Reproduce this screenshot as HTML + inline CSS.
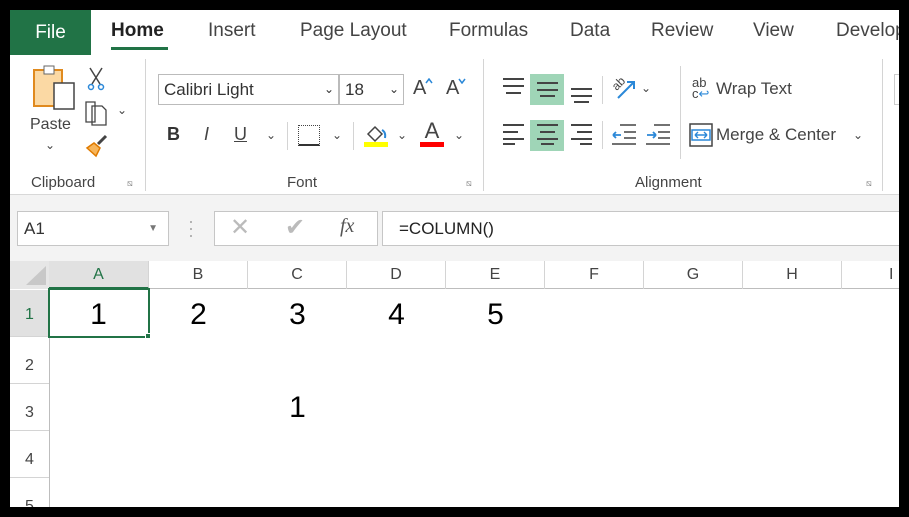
<!DOCTYPE html>
<html><head><meta charset="utf-8"><style>
*{margin:0;padding:0;box-sizing:border-box}
html,body{overflow:hidden}
body{width:909px;height:517px;background:#000;position:relative;overflow:hidden;font-family:"Segoe UI","Liberation Sans",sans-serif;color:#444}
.a{position:absolute}
.t{position:absolute;font-size:19px;color:#444;top:20px}
.ch{position:absolute;top:261px;height:28px;font-size:16px;color:#444;text-align:center;line-height:28px;border-right:1px solid #d4d4d4}
.rh{position:absolute;left:10px;width:39px;font-size:16px;color:#444;text-align:center;border-bottom:1px solid #d4d4d4}
.n{position:absolute;font-size:30px;color:#000;text-align:center;width:99px}
.sel{background:#9fd5b7}
.ln{position:absolute;height:2px;background:#444}
</style></head><body>
<div class="a" style="left:10px;top:10px;width:889px;height:497px;background:#fff;overflow:hidden">
</div>
<div class="a" style="left:10px;top:10px;width:81px;height:45px;background:#217346;color:#fff;font-size:19px;line-height:45px;text-align:center">File</div>
<div class="t" style="left:111px;color:#222;font-weight:600">Home</div>
<div class="a" style="left:111px;top:47px;width:57px;height:3px;background:#217346"></div>
<div class="t" style="left:208px">Insert</div>
<div class="t" style="left:300px">Page Layout</div>
<div class="t" style="left:449px">Formulas</div>
<div class="t" style="left:570px">Data</div>
<div class="t" style="left:651px">Review</div>
<div class="t" style="left:753px">View</div>
<div class="t" style="left:836px">Develop</div>
<div class="a" style="left:10px;top:194px;width:889px;height:1px;background:#d8d8d8"></div>
<div class="a" style="left:10px;top:195px;width:889px;height:66px;background:#f3f3f3"></div>
<svg class="a" style="left:32px;top:64px" width="46" height="48"><rect x="2" y="6" width="28" height="36" fill="#fbd9a4" stroke="#e08a1e" stroke-width="2"/><rect x="12" y="2" width="10" height="8" fill="#fff" stroke="#666"/><rect x="22" y="19" width="20" height="26" fill="#fff" stroke="#444" stroke-width="1.5"/></svg>
<div class="a" style="left:30px;top:116px;font-size:16px">Paste</div>
<div class="a" style="left:45px;top:138px;font-size:12px">⌄</div>
<svg class="a" style="left:86px;top:66px" width="20" height="25"><path d="M4 2 L14 18 M16 2 L6 18" stroke="#444" stroke-width="1.5"/><circle cx="5" cy="21" r="2.5" fill="none" stroke="#2b88d8" stroke-width="1.5"/><circle cx="15" cy="21" r="2.5" fill="none" stroke="#2b88d8" stroke-width="1.5"/></svg>
<svg class="a" style="left:84px;top:100px" width="26" height="26"><path d="M2 2h9v20H2z M8 6h10l4 4v15H8z" fill="#fff" stroke="#444" stroke-width="1.3"/></svg>
<div class="a" style="left:117px;top:103px;font-size:12px">⌄</div>
<svg class="a" style="left:84px;top:134px" width="26" height="24"><path d="M3 14 L12 22 L16 14 L10 9z" fill="#f7b55a" stroke="#e07b00" stroke-width="1.5"/><path d="M14 10 L22 2" stroke="#444" stroke-width="3"/></svg>
<div class="a" style="left:31px;top:174px;font-size:15px">Clipboard</div>
<div class="a" style="left:127px;top:178px;font-size:9px;color:#888">⧅</div>
<div class="a" style="left:145px;top:59px;width:1px;height:132px;background:#d4d4d4"></div>
<div class="a" style="left:158px;top:74px;width:181px;height:31px;border:1px solid #bbb;font-size:17px;line-height:29px;padding-left:5px;color:#333">Calibri Light<span style="position:absolute;right:4px;font-size:12px">⌄</span></div>
<div class="a" style="left:339px;top:74px;width:65px;height:31px;border:1px solid #bbb;font-size:17px;line-height:29px;padding-left:5px;color:#333">18<span style="position:absolute;right:4px;font-size:12px">⌄</span></div>
<div class="a" style="left:413px;top:77px;font-size:20px">A</div>
<svg class="a" style="left:425px;top:78px" width="8" height="6"><path d="M1 5 L4 1 L7 5" stroke="#2b88d8" stroke-width="1.5" fill="none"/></svg>
<div class="a" style="left:446px;top:77px;font-size:20px">A</div>
<svg class="a" style="left:458px;top:78px" width="8" height="6"><path d="M1 1 L4 5 L7 1" stroke="#2b88d8" stroke-width="1.5" fill="none"/></svg>
<div class="a" style="left:167px;top:124px;font-size:18px;font-weight:bold;color:#333">B</div>
<div class="a" style="left:204px;top:124px;font-size:18px;font-style:italic">I</div>
<div class="a" style="left:234px;top:124px;font-size:18px;text-decoration:underline">U</div>
<div class="a" style="left:266px;top:128px;font-size:12px">⌄</div>
<div class="a" style="left:287px;top:122px;width:1px;height:28px;background:#d4d4d4"></div>
<div class="a" style="left:298px;top:125px;width:22px;height:21px;border:1px dotted #444;border-bottom:2px solid #333"></div>
<div class="a" style="left:332px;top:128px;font-size:12px">⌄</div>
<div class="a" style="left:353px;top:122px;width:1px;height:28px;background:#d4d4d4"></div>
<svg class="a" style="left:364px;top:122px" width="26" height="26"><path d="M4 12 L11 5 L18 12 L11 19z" fill="#fff" stroke="#444" stroke-width="1.5"/><path d="M18 8 q4 2 3 8" stroke="#2b88d8" stroke-width="2" fill="none"/><rect x="0" y="20" width="24" height="5" fill="#ff0"/></svg>
<div class="a" style="left:397px;top:128px;font-size:12px">⌄</div>
<div class="a" style="left:420px;top:118px;width:24px;text-align:center;font-size:22px">A</div>
<div class="a" style="left:420px;top:142px;width:24px;height:5px;background:#f00"></div>
<div class="a" style="left:454px;top:128px;font-size:12px">⌄</div>
<div class="a" style="left:287px;top:174px;font-size:15px">Font</div>
<div class="a" style="left:466px;top:178px;font-size:9px;color:#888">⧅</div>
<div class="a" style="left:483px;top:59px;width:1px;height:132px;background:#d4d4d4"></div>
<div class="a sel" style="left:530px;top:74px;width:34px;height:31px"></div>
<div class="a sel" style="left:530px;top:120px;width:34px;height:31px"></div>
<div class="ln" style="left:503px;top:78px;width:21px"></div><div class="ln" style="left:503px;top:85px;width:21px"></div><div class="ln" style="left:506px;top:92px;width:15px"></div>
<div class="ln" style="left:537px;top:82px;width:21px"></div><div class="ln" style="left:537px;top:89px;width:21px"></div><div class="ln" style="left:540px;top:95px;width:15px"></div>
<div class="ln" style="left:571px;top:88px;width:21px"></div><div class="ln" style="left:571px;top:95px;width:21px"></div><div class="ln" style="left:574px;top:101px;width:15px"></div>
<div class="ln" style="left:503px;top:124px;width:21px"></div><div class="ln" style="left:503px;top:131px;width:15px"></div><div class="ln" style="left:503px;top:138px;width:21px"></div><div class="ln" style="left:503px;top:143px;width:12px"></div>
<div class="ln" style="left:537px;top:124px;width:21px"></div><div class="ln" style="left:540px;top:131px;width:15px"></div><div class="ln" style="left:537px;top:138px;width:21px"></div><div class="ln" style="left:541px;top:143px;width:13px"></div>
<div class="ln" style="left:571px;top:124px;width:21px"></div><div class="ln" style="left:577px;top:131px;width:15px"></div><div class="ln" style="left:571px;top:138px;width:21px"></div><div class="ln" style="left:580px;top:143px;width:12px"></div>
<div class="a" style="left:602px;top:76px;width:1px;height:28px;background:#d4d4d4"></div>
<div class="a" style="left:602px;top:121px;width:1px;height:28px;background:#d4d4d4"></div>
<svg class="a" style="left:612px;top:74px" width="28" height="26"><text x="0" y="14" font-size="12" fill="#444" transform="rotate(-45 6 10)" font-family="Liberation Sans">ab</text><path d="M6 24 L22 8 M15 8h7v7" stroke="#2b88d8" stroke-width="2" fill="none"/></svg>
<div class="a" style="left:641px;top:81px;font-size:12px">⌄</div>
<svg class="a" style="left:612px;top:122px" width="26" height="24"><path d="M8 3h16M12 10h12M12 16h12M0 22h24" stroke="#444" stroke-width="1.5" fill="none"/><path d="M1 13h8M1 13l3-3M1 13l3 3" stroke="#2b88d8" stroke-width="1.8" fill="none"/></svg>
<svg class="a" style="left:646px;top:122px" width="26" height="24"><path d="M8 3h16M12 10h12M12 16h12M0 22h24" stroke="#444" stroke-width="1.5" fill="none"/><path d="M1 13h9M10 13l-3-3M10 13l-3 3" stroke="#2b88d8" stroke-width="1.8" fill="none"/></svg>
<div class="a" style="left:680px;top:66px;width:1px;height:93px;background:#d4d4d4"></div>
<div class="a" style="left:692px;top:77px;font-size:13px;line-height:11px;color:#444">ab<br>c<span style="color:#2b88d8">↩</span></div>
<div class="a" style="left:716px;top:79px;font-size:17px">Wrap Text</div>
<svg class="a" style="left:689px;top:123px" width="24" height="24"><rect x="1" y="1" width="22" height="22" fill="#fff" stroke="#444" stroke-width="1.5"/><rect x="3" y="7" width="18" height="10" fill="#fff" stroke="#2b88d8" stroke-width="1.5"/><path d="M6 12h12M6 12l3-3M6 12l3 3M18 12l-3-3M18 12l-3 3" stroke="#2b88d8" stroke-width="1.4" fill="none"/></svg>
<div class="a" style="left:716px;top:125px;font-size:17px">Merge &amp; Center</div>
<div class="a" style="left:853px;top:128px;font-size:12px">⌄</div>
<div class="a" style="left:635px;top:174px;font-size:15px">Alignment</div>
<div class="a" style="left:866px;top:178px;font-size:9px;color:#888">⧅</div>
<div class="a" style="left:882px;top:59px;width:1px;height:132px;background:#d4d4d4"></div>
<div class="a" style="left:894px;top:74px;width:5px;height:31px;border:1px solid #ccc;border-right:none"></div>
<div class="a" style="left:17px;top:211px;width:152px;height:35px;background:#fff;border:1px solid #c6c6c6;font-size:17px;line-height:33px;padding-left:6px;color:#333">A1<span style="position:absolute;right:10px;font-size:10px;color:#777">▼</span></div>
<div class="a" style="left:188px;top:218px;font-size:18px;color:#aaa;line-height:7px">·<br>·<br>·</div>
<div class="a" style="left:214px;top:211px;width:164px;height:35px;background:#fff;border:1px solid #c6c6c6"></div>
<div class="a" style="left:230px;top:213px;font-size:24px;color:#bbb">✕</div>
<div class="a" style="left:285px;top:213px;font-size:24px;color:#bbb">✔</div>
<div class="a" style="left:340px;top:215px;font-size:20px;font-style:italic;font-family:'Liberation Serif',serif;color:#555">fx</div>
<div class="a" style="left:382px;top:211px;width:520px;height:35px;background:#fff;border:1px solid #c6c6c6;font-size:17px;line-height:33px;padding-left:16px;color:#222">=COLUMN()</div>
<div class="a" style="left:10px;top:261px;width:889px;height:28px;background:#fff;border-bottom:1px solid #bdbdbd"></div>
<div class="a" style="left:10px;top:261px;width:39px;height:28px;background:#e6e6e6"></div>
<svg class="a" style="left:25px;top:266px" width="22" height="20"><path d="M21 0V19H1z" fill="#c8c8c8"/></svg>
<div class="ch" style="left:49px;width:100px;background:#e1e1e1;color:#217346;border-bottom:2px solid #217346;height:28px">A</div>
<div class="ch" style="left:149px;width:99px">B</div>
<div class="ch" style="left:248px;width:99px">C</div>
<div class="ch" style="left:347px;width:99px">D</div>
<div class="ch" style="left:446px;width:99px">E</div>
<div class="ch" style="left:545px;width:99px">F</div>
<div class="ch" style="left:644px;width:99px">G</div>
<div class="ch" style="left:743px;width:99px">H</div>
<div class="ch" style="left:842px;width:57px;border:none;text-align:left;padding-left:47px">I</div>
<div class="a" style="left:49px;top:289px;width:1px;height:218px;background:#bdbdbd"></div>
<div class="rh" style="top:290px;height:47px;line-height:49px;background:#e1e1e1;color:#217346">1</div>
<div class="rh" style="top:337px;height:47px;line-height:58px">2</div>
<div class="rh" style="top:384px;height:47px;line-height:58px">3</div>
<div class="rh" style="top:431px;height:47px;line-height:58px">4</div>
<div class="rh" style="top:478px;height:29px;line-height:58px;border:none;overflow:hidden">5</div>
<div class="a" style="left:48px;top:288px;width:102px;height:50px;border:2px solid #217346"></div>
<div class="a" style="left:145px;top:333px;width:6px;height:6px;background:#217346;border:1px solid #fff"></div>
<div class="n" style="left:49px;top:298px">1</div>
<div class="n" style="left:149px;top:298px">2</div>
<div class="n" style="left:248px;top:298px">3</div>
<div class="n" style="left:347px;top:298px">4</div>
<div class="n" style="left:446px;top:298px">5</div>
<div class="n" style="left:248px;top:391px">1</div>
<div class="a" style="left:0;top:507px;width:909px;height:10px;background:#000"></div>
<div class="a" style="left:0;top:0;width:909px;height:10px;background:#000"></div>
<div class="a" style="left:0;top:0;width:10px;height:517px;background:#000"></div>
<div class="a" style="left:899px;top:0;width:10px;height:517px;background:#000"></div>
</body></html>
